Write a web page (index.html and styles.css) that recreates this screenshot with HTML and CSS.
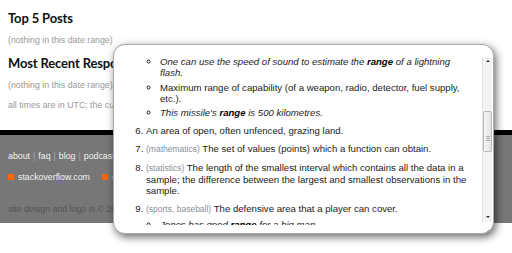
FILE: index.html
```html
<!DOCTYPE html>
<html lang="en">
<head>
    <meta charset="UTF-8">
    <title>User Activity</title>
    <link rel="stylesheet" href="styles.css">
</head>
<body>
    <div class="content">
        <h2>Top 5 Posts</h2>
        <p class="empty">(nothing in this date range)</p>
        <h2>Most Recent Responses</h2>
        <p class="empty">(nothing in this date range)</p>
        <p class="note">all times are in UTC; the current time is 14:32</p>
    </div>

    <div class="footer">
        <div class="footer-menu">
            <a href="#">about</a><span class="sep">|</span><a href="#">faq</a><span class="sep">|</span><a href="#">blog</a><span class="sep">|</span><a href="#">podcast</a><span class="sep">|</span><a href="#">privacy policy</a>
        </div>
        <div class="footer-sites">
            <span class="site"><i class="dot"></i>stackoverflow.com</span>
            <span class="site"><i class="dot"></i>careers</span>
        </div>
        <div class="copyright">site design and logo is © 2009 stackoverflow.com; user contributions licensed under cc-wiki</div>
    </div>

    <!-- dictionary popup over the page -->
    <div class="popup">
        <div class="popup-body">
            <ul class="senses cont">
                <li class="ex"><i>One can use the speed of sound to estimate the <b>range</b> of a lightning flash.</i></li>
                <li>Maximum range of capability (of a weapon, radio, detector, fuel supply, etc.).</li>
                <li class="ex"><i>This missile's <b>range</b> is 500 kilometres.</i></li>
            </ul>
            <ol class="defs" start="6">
                <li>An area of open, often unfenced, grazing land.</li>
                <li><span class="label">(mathematics)</span> The set of values (points) which a function can obtain.</li>
                <li><span class="label">(statistics)</span> The length of the smallest interval which contains all the data in a sample; the difference between the largest and smallest observations in the sample.</li>
                <li><span class="label">(sports, baseball)</span> The defensive area that a player can cover.
                    <ul class="senses">
                        <li class="ex"><i>Jones has good <b>range</b> for a big man.</i></li>
                    </ul>
                </li>
            </ol>
        </div>
        <div class="scrollbar">
            <div class="arrow up"></div>
            <div class="track">
                <div class="thumb"><span class="grip"></span></div>
            </div>
            <div class="arrow down"></div>
            <div class="resize">
                <svg width="8" height="8" viewBox="0 0 8 8"><path d="M7 2L2 7M7 5L5 7" stroke="#888" stroke-width="1"/></svg>
            </div>
        </div>
    </div>
</body>
</html>
```

FILE: styles.css
```css
body {
    margin: 0;
    background-color: white;
    font-family: 'Liberation Sans', Arial, sans-serif;
    overflow: hidden;
}

.content {
    padding: 10px 8px 0;
    height: 120px;
    white-space: nowrap;
}

h2 {
    font-family: Lato, 'DejaVu Sans', sans-serif;
    font-size: 13px;
    line-height: 16px;
    font-weight: bold;
    color: #111;
    letter-spacing: -0.15px;
    margin: 0 0 9px;
}

.empty,
.note {
    font-size: 8.8px;
    line-height: 11px;
    color: #999;
    margin: 0 0 9px;
}

.footer {
    border-top: 5px solid #000;
    background-color: #777;
    padding: 16px 8px 8px;
    font-size: 8.8px;
    line-height: 11px;
    white-space: nowrap;
    overflow: hidden;
}

.footer a {
    color: #f2f2f2;
    text-decoration: none;
}

.sep {
    color: #aaa;
    margin: 0 3px;
}

.footer-sites {
    margin-top: 10px;
    color: #f2f2f2;
}

.site {
    margin-right: 10px;
}

.dot {
    display: inline-block;
    width: 6px;
    height: 6px;
    background-color: #f60;
    margin-right: 4px;
    vertical-align: 0;
}

.copyright {
    margin-top: 21px;
    color: #555;
}

/* popup */
.popup {
    position: absolute;
    left: 113px;
    top: 44px;
    width: 381px;
    height: 190px;
    box-sizing: border-box;
    background-color: white;
    border: 1px solid #aaa;
    border-radius: 12px;
    box-shadow: 2px 3px 8px rgba(0, 0, 0, 0.6);
    display: flex;
}

.popup-body {
    flex: 1;
    margin: 11px 0 8px;
    padding: 0 8px;
    overflow: hidden;
    font-size: 9.6px;
    line-height: 11px;
    color: #222;
}

.popup-body b {
    color: #000;
}

.defs {
    margin: 0;
    padding-left: 24px;
}

.defs > li {
    margin-top: 7px;
}

.senses {
    margin: 0;
    padding-left: 14px;
    list-style: circle;
}

.senses.cont {
    padding-left: 38px;
}

.defs .senses {
    margin-top: 4px;
}

.senses li + li {
    margin-top: 3.5px;
}

.label {
    font-size: 8.5px;
    color: #8a8f99;
}

/* fake scrollbar */
.scrollbar {
    width: 10px;
    margin: 12px 1px 0 0;
    display: flex;
    flex-direction: column;
}

.track {
    flex: 1;
    background-color: #f3f3f3;
    border-left: 1px solid #e2e2e2;
    padding-top: 45px;
    padding-bottom: 61px;
}

.thumb {
    height: 100%;
    box-sizing: border-box;
    border: 1px solid #bbb;
    border-radius: 2px;
    background: linear-gradient(to right, #f6f6f6, #e4e4e4);
    display: flex;
    align-items: center;
    justify-content: center;
}

.grip {
    width: 4px;
    height: 5px;
    background: repeating-linear-gradient(to bottom, #aaa 0, #aaa 1px, transparent 1px, transparent 2px);
    margin-top: 14px;
}

.arrow {
    height: 9px;
    background-color: #f3f3f3;
    border-left: 1px solid #e2e2e2;
    position: relative;
}

.arrow::after {
    content: "";
    position: absolute;
    left: 3px;
    top: 3px;
    border-left: 2px solid transparent;
    border-right: 2px solid transparent;
}

.arrow.up::after {
    border-bottom: 2px solid #333;
}

.arrow.down::after {
    border-top: 2px solid #333;
}

.resize {
    height: 9px;
    margin-bottom: 2px;
}
```
